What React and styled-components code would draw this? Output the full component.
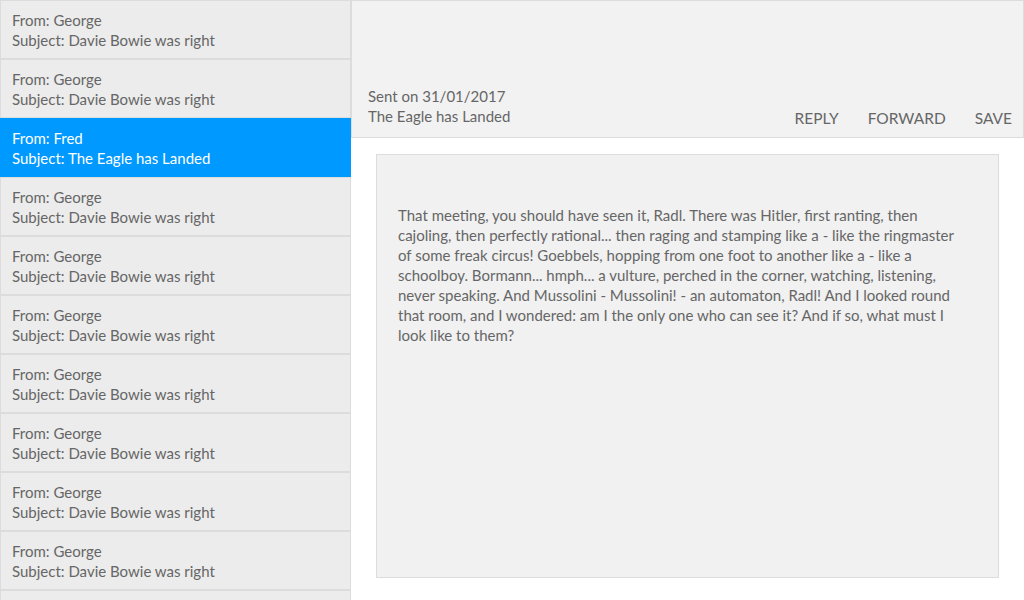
import React from "react";
import styled, { createGlobalStyle } from "styled-components";

const Global = createGlobalStyle`
  html, body { margin: 0; padding: 0; background: #ffffff; }
  body { font-family: Lato, "Open Sans", sans-serif; }
  * { box-sizing: border-box; }
`;

const Page = styled.div`
  display: flex;
  width: 1024px;
  height: 600px;
  overflow: hidden;
  font-family: Lato, "Open Sans", sans-serif;
  font-size: 15px;
  color: #666666;
`;

const List = styled.div`
  width: 351px;
  flex: none;
  display: flex;
  flex-direction: column;
  overflow: hidden;
`;

const Item = styled.div`
  height: 59px;
  flex: none;
  padding: 9px 11px;
  line-height: 20px;
  border: 1px solid ${(p) => (p.$active ? "#0099ff" : "#dcdcdc")};
  background: ${(p) => (p.$active ? "#0099ff" : "#ececec")};
  color: ${(p) => (p.$active ? "#ffffff" : "#666666")};
`;

const Main = styled.div`
  flex: 1;
  display: flex;
  flex-direction: column;
`;

const Header = styled.div`
  height: 138px;
  flex: none;
  background: #f2f2f2;
  border: 1px solid #dcdcdc;
  display: flex;
  align-items: flex-end;
  justify-content: space-between;
  padding: 0 11px 9px 16px;
  line-height: 20px;
`;

const Meta = styled.div`
  display: flex;
  flex-direction: column;
  padding-bottom: 2px;
`;

const Actions = styled.div`
  display: flex;
  gap: 29px;
`;

const Action = styled.span`
  font-size: 15.5px;
  color: #666666;
  text-transform: uppercase;
`;

const Body = styled.div`
  flex: 1;
  padding: 16px 25px 22px 25px;
  display: flex;
`;

const Card = styled.div`
  flex: 1;
  background: #f1f1f1;
  border: 1px solid #dcdcdc;
  padding: 50px 10px 0 21px;
  line-height: 20px;
  white-space: nowrap;
`;

const items = [
  { from: "George", subject: "Davie Bowie was right" },
  { from: "George", subject: "Davie Bowie was right" },
  { from: "Fred", subject: "The Eagle has Landed", active: true },
  { from: "George", subject: "Davie Bowie was right" },
  { from: "George", subject: "Davie Bowie was right" },
  { from: "George", subject: "Davie Bowie was right" },
  { from: "George", subject: "Davie Bowie was right" },
  { from: "George", subject: "Davie Bowie was right" },
  { from: "George", subject: "Davie Bowie was right" },
  { from: "George", subject: "Davie Bowie was right" },
];

const lines = [
  "That meeting, you should have seen it, Radl. There was Hitler, first ranting, then",
  "cajoling, then perfectly rational... then raging and stamping like a - like the ringmaster",
  "of some freak circus! Goebbels, hopping from one foot to another like a - like a",
  "schoolboy. Bormann... hmph... a vulture, perched in the corner, watching, listening,",
  "never speaking. And Mussolini - Mussolini! - an automaton, Radl! And I looked round",
  "that room, and I wondered: am I the only one who can see it? And if so, what must I",
  "look like to them?",
];

export default function App() {
  return (
    <>
      <Global />
      <Page>
        <List>
          {items.map((it, i) => (
            <Item key={i} $active={it.active}>
              <div>From: {it.from}</div>
              <div>Subject: {it.subject}</div>
            </Item>
          ))}
          <Item />
        </List>
        <Main>
          <Header>
            <Meta>
              <span>Sent on 31/01/2017</span>
              <span>The Eagle has Landed</span>
            </Meta>
            <Actions>
              <Action>Reply</Action>
              <Action>Forward</Action>
              <Action>Save</Action>
            </Actions>
          </Header>
          <Body>
            <Card>
              {lines.map((l, i) => (
                <React.Fragment key={i}>
                  {l}
                  {i < lines.length - 1 && <br />}
                </React.Fragment>
              ))}
            </Card>
          </Body>
        </Main>
      </Page>
    </>
  );
}
